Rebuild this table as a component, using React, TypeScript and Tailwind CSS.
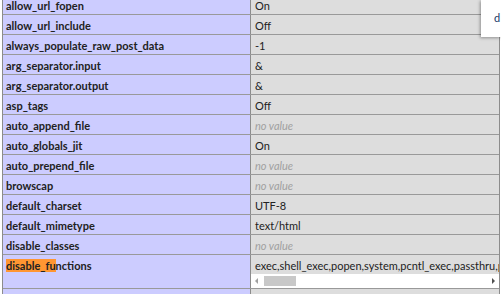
import React from 'react';

type Row = { name: string; value?: string };

const rows: Row[] = [
  { name: 'allow_url_fopen', value: 'On' },
  { name: 'allow_url_include', value: 'Off' },
  { name: 'always_populate_raw_post_data', value: '-1' },
  { name: 'arg_separator.input', value: '&' },
  { name: 'arg_separator.output', value: '&' },
  { name: 'asp_tags', value: 'Off' },
  { name: 'auto_append_file' },
  { name: 'auto_globals_jit', value: 'On' },
  { name: 'auto_prepend_file' },
  { name: 'browscap' },
  { name: 'default_charset', value: 'UTF-8' },
  { name: 'default_mimetype', value: 'text/html' },
  { name: 'disable_classes' },
];

const font = { fontFamily: 'Lato, "Open Sans", sans-serif' };

function Value({ value }: { value?: string }) {
  if (value === undefined) return <i className="text-[#a0a0a0]">no value</i>;
  return <span>{value}</span>;
}

export default function App() {
  return (
    <div className="relative h-[294px] w-[501px] overflow-hidden bg-white text-[11px] text-[#222]" style={font}>
      <div className="-mt-[5px] ml-[2px] w-[498px] border-l border-r border-[#8c8c8c]">
        {rows.map((r) => (
          <div key={r.name} className="grid h-[20px] grid-cols-[248px_1fr] border-b border-[#999]">
            <div className="flex items-center border-r border-[#8c8c8c] bg-[#ccccff] pl-[3px] pt-[1px] font-bold leading-none">
              {r.name}
            </div>
            <div className="flex items-center bg-[#dddddd] pl-[4px] pt-[1px] leading-none">
              <Value value={r.value} />
            </div>
          </div>
        ))}

        <div className="grid h-[34px] grid-cols-[248px_1fr] border-b border-[#999]">
          <div className="border-r border-[#8c8c8c] bg-[#ccccff] pl-[3px] pt-[4px] font-bold leading-[13px]">
            <span className="bg-[#ff9632]">disable_fu</span>nctions
          </div>
          <div className="flex min-w-0 flex-col bg-[#dddddd]">
            <div className="overflow-hidden whitespace-nowrap pl-[4px] pt-[4px] leading-[13px]">
              exec,shell_exec,popen,system,pcntl_exec,passthru,popen,proc_open,shell_exec
            </div>
            <div className="mt-auto flex h-[14px] items-center bg-white">
              <span className="ml-[4px] h-0 w-0 border-y-[3px] border-r-[3px] border-y-transparent border-r-[#a0a0a0]" />
              <span className="ml-[6px] h-[10px] w-[32px] bg-[#c8c8c8]" />
              <span className="ml-auto mr-[4px] h-0 w-0 border-y-[3px] border-l-[3px] border-y-transparent border-l-[#505050]" />
            </div>
          </div>
        </div>

        <div className="grid h-[20px] grid-cols-[248px_1fr]">
          <div className="border-r border-[#8c8c8c] bg-[#ccccff]" />
          <div className="bg-[#dddddd]" />
        </div>
      </div>

      <div className="absolute right-0 top-0 flex h-[37px] w-[20px] items-center bg-white pl-[13px] shadow-[-1px_1px_3px_rgba(0,0,0,0.35)]">
        <span className="text-[11px] text-[#1a3a6a]">d</span>
      </div>
    </div>
  );
}
